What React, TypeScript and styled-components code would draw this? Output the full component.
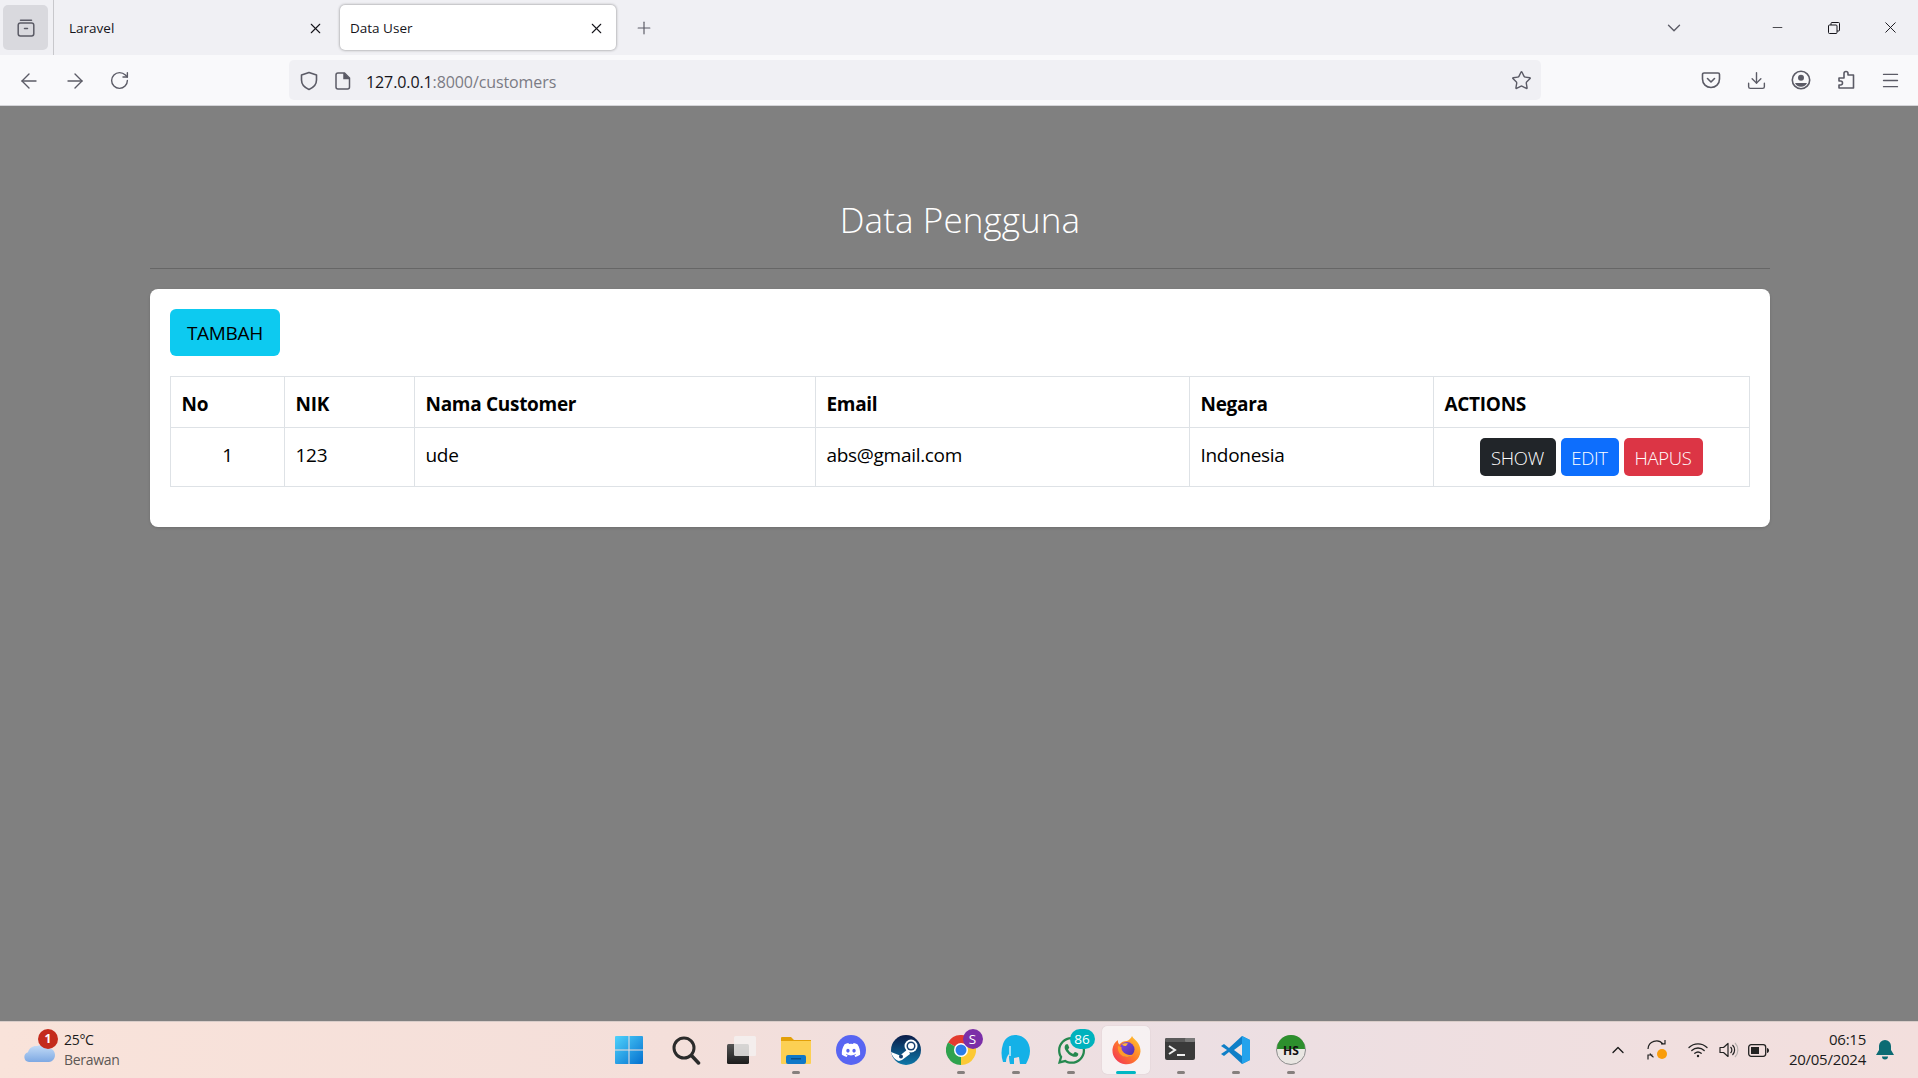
import React from 'react';
import styled, { createGlobalStyle } from 'styled-components';
import {
  ArrowLeft,
  ArrowRight,
  ChevronDown,
  ChevronUp,
  Download,
  Menu,
  Minus,
  Plus,
  RotateCw,
  Star,
  X,
} from 'lucide-react';
import { FaDiscord, FaWhatsapp } from 'react-icons/fa';

const GlobalStyle = createGlobalStyle`
  html, body { margin: 0; padding: 0; height: 100%; overflow: hidden; }
  #root { height: 100%; }
  * { box-sizing: border-box; }
  body { font-family: "Open Sans", "Noto Sans", "Liberation Sans", sans-serif; }
`;

const Screen = styled.div`
  height: 1078px;
  display: flex;
  flex-direction: column;
  background: #808080;
`;

/* browser chrome */
const TabBar = styled.div`
  height: 55px;
  flex: none;
  display: flex;
  align-items: center;
  padding-left: 3px;
  background: #f0f0f4;
  color: #15141a;
`;

const TabListButton = styled.div`
  width: 45px;
  height: 45px;
  border-radius: 5px;
  background: #d9d9de;
  display: flex;
  align-items: center;
  justify-content: center;
  flex: none;
`;

const TabDivider = styled.div`
  width: 1px;
  height: 55px;
  margin: 0 5px;
  background: #c8c8cc;
  flex: none;
`;

const Tab = styled.div<{ $active?: boolean }>`
  width: 276px;
  height: 45px;
  flex: none;
  margin-right: 5px;
  padding: 1px 11px 0 10px;
  display: flex;
  align-items: center;
  justify-content: space-between;
  border-radius: 5px;
  font-size: 13.5px;
  background: ${(p) => (p.$active ? '#fff' : 'transparent')};
  box-shadow: ${(p) => (p.$active ? '0 0 3px rgba(0,0,0,.45)' : 'none')};
`;

const NewTab = styled.div`
  margin-left: 13px;
  padding-top: 1px;
  display: flex;
  color: #5b5b66;
`;

const TabBarEnd = styled.div`
  margin-left: auto;
  margin-right: -1px;
  display: flex;
  align-items: center;
  height: 100%;
`;

const AllTabs = styled.div`
  display: flex;
  color: #5b5b66;
  margin-right: 65px;
`;

const WindowButton = styled.div`
  width: 56.5px;
  display: flex;
  justify-content: center;
  color: #15141a;
`;

const Toolbar = styled.div`
  height: 51px;
  flex: none;
  display: flex;
  align-items: center;
  padding: 0 17px;
  background: #f9f9fb;
  color: #5b5b66;
  border-bottom: 1px solid #d4d4d8;
`;

const NavGroup = styled.div`
  width: 272px;
  flex: none;
  display: flex;
  align-items: center;
  gap: 22px;
  padding-top: 1px;
`;

const UrlBar = styled.div`
  width: 1252px;
  height: 40px;
  flex: none;
  border-radius: 5px;
  background: #f0f0f4;
  display: flex;
  align-items: center;
  padding: 1px 9px 0 10px;
`;

const UrlGap = styled.span`
  width: 16px;
`;

const UrlText = styled.div`
  margin-left: 15px;
  padding-top: 2px;
  font-size: 16px;
  letter-spacing: -0.1px;
  color: #15141a;
  span { color: #7b7b84; }
`;

const UrlEnd = styled.div`
  margin-left: auto;
  display: flex;
`;

const ToolIcons = styled.div`
  margin-left: auto;
  display: flex;
  gap: 24.5px;
  padding-top: 1px;
`;

/* page */
const Main = styled.main`
  flex: 1;
  padding: 0 148px 0 150px;
`;

const Title = styled.h1`
  margin: 0;
  height: 163px;
  padding-top: 92px;
  border-bottom: 1px solid #666;
  text-align: center;
  font-size: 35px;
  line-height: 44px;
  font-weight: 300;
  letter-spacing: .1px;
  color: #fff;
`;

const Card = styled.section`
  margin-top: 20px;
  height: 238px;
  padding: 20px;
  background: #fff;
  border-radius: 8px;
  box-shadow: 0 1px 3px rgba(0,0,0,.15);
`;

const AddButton = styled.button`
  display: block;
  width: 110px;
  height: 47px;
  padding: 0;
  border: 0;
  border-radius: 6px;
  background: #0dcaf0;
  color: #000;
  font: 400 19px "Open Sans", sans-serif;
  letter-spacing: -0.3px;
`;

const Table = styled.table`
  margin-top: 20px;
  width: 1579px;
  table-layout: fixed;
  border-collapse: collapse;
  color: #000;
  font-size: 19px;
`;

const Th = styled.th`
  height: 51px;
  padding: 4px 10.5px 0;
  text-align: left;
  font-weight: 700;
  border: 1.5px solid #dee2e6;
  letter-spacing: -0.3px;
`;

const Td = styled.td<{ $center?: boolean }>`
  height: 59px;
  padding: 0 10.5px 5px;
  border: 1.5px solid #dee2e6;
  font-weight: 400;
  letter-spacing: -0.3px;
  text-align: ${(p) => (p.$center ? 'center' : 'left')};
`;

const Actions = styled.div`
  display: flex;
  justify-content: center;
  gap: 5px;
  padding: 5px 1px 0 0;
`;

const ActionButton = styled.button<{ $bg: string; $w: number }>`
  width: ${(p) => p.$w}px;
  height: 38px;
  padding: 1px 0 0;
  border: 0;
  border-radius: 5px;
  background: ${(p) => p.$bg};
  color: #fff;
  font: 300 18.5px "Open Sans", sans-serif;
  letter-spacing: -0.3px;
`;

/* windows taskbar */
const Taskbar = styled.footer`
  height: 57px;
  flex: none;
  display: grid;
  grid-template-columns: 1fr auto 1fr;
  align-items: center;
  background: linear-gradient(90deg, #f9e3da 0%, #f4dfda 35%, #ecdfe3 62%, #f3dfdd 100%);
  border-top: 1px solid #d9cdc9;
  color: #1b1b1b;
`;

const Weather = styled.div`
  display: flex;
  align-items: center;
  padding-left: 23px;
  position: relative;
`;

const WeatherText = styled.div`
  margin-left: 7px;
  font-size: 14px;
  line-height: 20px;
  letter-spacing: -0.3px;
  small { display: block; font-size: 14px; color: #5d5855; }
`;

const Slots = styled.div`
  display: flex;
  padding-left: 2px;
`;

const Slot = styled.div<{ $active?: boolean; $mark?: 'dot' | 'bar'; $after?: number }>`
  width: 55px;
  height: 48px;
  margin-right: ${(p) => p.$after || 0}px;
  position: relative;
  display: flex;
  align-items: center;
  justify-content: center;
  border-radius: 5px;
  &::before {
    content: '';
    position: absolute;
    inset: 0 3.5px;
    border-radius: 5px;
    background: ${(p) => (p.$active ? 'rgba(255,255,255,.55)' : 'transparent')};
    box-shadow: ${(p) => (p.$active ? '0 0 1px rgba(0,0,0,.2)' : 'none')};
  }
  &::after {
    content: '';
    position: absolute;
    bottom: 0;
    left: 50%;
    transform: translateX(-50%);
    display: ${(p) => (p.$mark ? 'block' : 'none')};
    width: ${(p) => (p.$mark === 'bar' ? 20 : 8)}px;
    height: 3px;
    border-radius: 2px;
    background: ${(p) => (p.$mark === 'bar' ? '#00b7c3' : '#857f7d')};
  }
  svg { position: relative; }
`;

const Badge = styled.span<{ $bg: string; $w?: number }>`
  position: absolute;
  top: 3px;
  right: ${(p) => (p.$w ? 4 : 6)}px;
  min-width: ${(p) => p.$w || 20}px;
  height: 20px;
  border-radius: 10px;
  background: ${(p) => p.$bg};
  color: #fff;
  font-size: 13.5px;
  line-height: 20px;
  text-align: center;
`;

const WeatherBadge = styled(Badge)`
  top: -1px;
  left: 38px;
  right: auto;
  font-weight: 700;
  font-size: 12px;
`;

const Tray = styled.div`
  justify-self: end;
  display: flex;
  align-items: center;
  color: #1b1b1b;
`;

const TrayIcon = styled.div<{ $w: number }>`
  width: ${(p) => p.$w}px;
  display: flex;
  justify-content: center;
`;

const Clock = styled.div`
  margin: 0 0 2px 11px;
  text-align: right;
  font-size: 15px;
  line-height: 20px;
  letter-spacing: -0.25px;
`;

const BellWrap = styled.div`
  display: flex;
  margin: 0 24px 0 10px;
`;

/* icons */
const TabsIcon = () => (
  <svg width="20" height="20" viewBox="0 0 20 20" fill="none" stroke="#5b5b66" strokeWidth="1.5">
    <path d="M4.5 2.2h11" strokeLinecap="round" />
    <rect x="2.2" y="5" width="15.6" height="13" rx="2.2" />
    <path d="M8.5 10.5h3" strokeLinecap="round" />
  </svg>
);

const ShieldIcon = () => (
  <svg width="20" height="20" viewBox="0 0 20 20" fill="none" stroke="#5b5b66" strokeWidth="1.6">
    <path d="M10 1.5l7.5 2.6v5c0 4.6-3.2 7.7-7.5 9.4-4.3-1.700-7.500-4.800-7.500-9.400v-5z" strokeLinejoin="round" />
  </svg>
);

const PageIcon = () => (
  <svg width="16" height="18" viewBox="0 0 16 18" fill="none" stroke="#5b5b66" strokeWidth="1.5">
    <path d="M3 1h6.500l5 5v9a2 2 0 0 1-2 2H3a2 2 0 0 1-2-2V3a2 2 0 0 1 2-2z" />
    <path d="M9 1v5.500h5.500" fill="#5b5b66" />
  </svg>
);

const PocketIcon = () => (
  <svg width="20" height="20" viewBox="0 0 20 20" fill="none" stroke="#5b5b66" strokeWidth="1.6">
    <path d="M3 3h14a1.500 1.500 0 0 1 1.500 1.500V9c0 5-3.800 8.500-8.500 8.500S1.500 14 1.500 9V4.500A1.500 1.500 0 0 1 3 3z" />
    <path d="M6.500 8.500L10 12l3.500-3.500" strokeLinecap="round" strokeLinejoin="round" />
  </svg>
);

const AccountIcon = () => (
  <svg width="20" height="20" viewBox="0 0 20 20" fill="none">
    <circle cx="10" cy="10" r="8.700" stroke="#5b5b66" strokeWidth="1.600" />
    <circle cx="10" cy="7.800" r="3" fill="#5b5b66" />
    <path d="M4 13h12c-.8 2.300-3.300 3.800-6 3.800S4.800 15.300 4 13z" fill="#5b5b66" />
  </svg>
);

const ExtensionIcon = () => (
  <svg width="20" height="20" viewBox="0 0 20 20" fill="none" stroke="#5b5b66" strokeWidth="1.600" strokeLinejoin="round">
    <path d="M8 5V3.500a2 2 0 0 1 4 0V5h5.500v13H3v-3h1.500a2 2 0 0 0 0-4H3V8h5z" />
  </svg>
);

const RestoreIcon = () => (
  <svg width="12" height="12" viewBox="0 0 12 12" fill="none" stroke="#15141a" strokeWidth="1">
    <rect x=".5" y="3" width="8.500" height="8.500" rx="1" />
    <path d="M3 3V1.500a1 1 0 0 1 1-1h6.500a1 1 0 0 1 1 1V8a1 1 0 0 1-1 1H9" />
  </svg>
);

const CloudIcon = () => (
  <svg width="34" height="30" viewBox="0 0 34 30">
    <defs>
      <linearGradient id="cloudFill" x1="0" y1="0" x2="0" y2="1">
        <stop offset="0" stopColor="#c4dcf7" />
        <stop offset="1" stopColor="#7ea9e3" />
      </linearGradient>
    </defs>
    <circle cx="23" cy="9" r="6" fill="#f59a23" />
    <path d="M6 27a5 5 0 0 1-1-9.800C6 13 10 10.500 14 11c3-1.500 7-1 10 2 4.500 0 8 2.500 8 7 0 4-3 7-6 7z" fill="url(#cloudFill)" />
  </svg>
);

const WindowsIcon = () => (
  <svg width="30" height="30" viewBox="0 0 30 30">
    <defs>
      <linearGradient id="winFill" x1="0" y1="0" x2="1" y2="1">
        <stop offset="0" stopColor="#4fd2fb" />
        <stop offset="1" stopColor="#0570cf" />
      </linearGradient>
    </defs>
    <path d="M1 2a1 1 0 0 1 1-1h12.500v13.500H1zM15.500 1H28a1 1 0 0 1 1 1v12.500H15.500zM1 15.500h13.500V29H2a1 1 0 0 1-1-1zM15.500 15.500H29V28a1 1 0 0 1-1 1H15.500z" fill="url(#winFill)" />
  </svg>
);

const SearchIcon = () => (
  <svg width="30" height="30" viewBox="0 0 30 30" fill="none" stroke="#2b2b2b" strokeWidth="3" strokeLinecap="round">
    <circle cx="13" cy="13" r="10" />
    <path d="M20.500 20.500L27.500 28" strokeWidth="3.500" />
  </svg>
);

const TaskViewIcon = () => (
  <svg width="30" height="30" viewBox="0 0 30 30">
    <defs>
      <linearGradient id="tvFill" x1="0" y1="0" x2="0" y2="1">
        <stop offset="0" stopColor="#555" />
        <stop offset="1" stopColor="#1c1c1c" />
      </linearGradient>
    </defs>
    <rect x="1" y="9" width="22" height="20" rx="1.500" fill="url(#tvFill)" />
    <rect x="8" y="1" width="22" height="20" rx="1.500" fill="#f4f1f0" fillOpacity=".82" />
  </svg>
);

const FolderIcon = () => (
  <svg width="32" height="28" viewBox="0 0 32 28">
    <path d="M1 2a1 1 0 0 1 1-1h9l3 3h17v5H1z" fill="#e3a008" />
    <path d="M1 5h30v22a1 1 0 0 1-1 1H2a1 1 0 0 1-1-1z" fill="#fcd053" />
    <rect x="6" y="19" width="20" height="9" rx="2" fill="#0f78c8" />
    <rect x="11" y="22" width="10" height="1.500" fill="#0a4f8a" />
  </svg>
);

const DiscordIcon = () => (
  <svg width="30" height="30" viewBox="0 0 30 30">
    <circle cx="15" cy="15" r="15" fill="#5865f2" />
    <foreignObject x="5" y="5" width="20" height="20">
      <FaDiscord size={20} color="#fff" />
    </foreignObject>
  </svg>
);

const SteamIcon = () => (
  <svg width="30" height="30" viewBox="0 0 30 30">
    <defs>
      <linearGradient id="steamFill" x1="0" y1="0" x2="0" y2="1">
        <stop offset="0" stopColor="#0b1c48" />
        <stop offset="1" stopColor="#0e77a8" />
      </linearGradient>
    </defs>
    <circle cx="15" cy="15" r="15" fill="url(#steamFill)" />
    <path d="M0 17l9 3.500 8-6.500 2 5-8 6-3 1C4 25 1 21 0 17z" fill="#fff" />
    <circle cx="20" cy="11" r="6.500" fill="#fff" />
    <circle cx="20" cy="11" r="4.500" fill="#17406f" />
    <circle cx="20" cy="11" r="3" fill="#fff" />
    <circle cx="10" cy="21.500" r="2" fill="#17406f" />
  </svg>
);

const ChromeIcon = () => (
  <svg width="30" height="30" viewBox="0 0 30 30">
    <path d="M15 15L2 7.500A15 15 0 0 1 28 7.500z" fill="#e33b2e" />
    <path d="M15 15l-13-7.500A15 15 0 0 0 15 30z" fill="#2fa24d" />
    <path d="M15 15l13-7.500A15 15 0 0 1 15 30z" fill="#fcc934" />
    <circle cx="15" cy="15" r="7" fill="#fff" />
    <circle cx="15" cy="15" r="5.500" fill="#2b7de9" />
  </svg>
);

const ElephantIcon = () => (
  <svg width="30" height="32" viewBox="0 0 30 32">
    <path d="M14 1c8 0 15 6 15 16 0 5-2 9-4 13h-6l-1-7-5 1v6H9c-1-4-1-7-1-10-2 2-3 5-3 8H2C0 22 0 16 2 10 4 4 9 1 14 1z" fill="#14b1e7" />
    <path d="M9 12v10" stroke="#fff" strokeWidth="1.200" fill="none" />
  </svg>
);

const WhatsAppIcon = () => <FaWhatsapp size={31} color="#25884f" />;

const FirefoxIcon = () => (
  <svg width="30" height="30" viewBox="0 0 30 30">
    <defs>
      <linearGradient id="foxOuter" x1="1" y1="0" x2="0" y2="1">
        <stop offset="0" stopColor="#ffd02e" />
        <stop offset=".5" stopColor="#ff7a2a" />
        <stop offset="1" stopColor="#f0295f" />
      </linearGradient>
      <linearGradient id="foxGlobe" x1="0" y1="0" x2="1" y2="1">
        <stop offset="0" stopColor="#8a4be0" />
        <stop offset="1" stopColor="#4a2ea8" />
      </linearGradient>
    </defs>
    <path d="M21 1c1 2.500 4 4 6 7 2 3 2.500 6 2.500 8.500A14 14 0 1 1 1.500 14C2 10 4 7 7 5c-.3 2 .2 3.500 1.500 4.500C10 7 13 6 16 6c2-1 4-2.500 5-5z" fill="url(#foxOuter)" />
    <circle cx="16" cy="14.500" r="7.500" fill="url(#foxGlobe)" />
    <path d="M7 11c-1 6 3 11 9 11 3 0 5.500-1.200 7-3-2 1-5 1.500-8 0-3-1.500-5-4-4.500-7-1.500-.2-2.500-.5-3.500-1z" fill="#ff9a2a" />
    <path d="M11 9.500c2-1.500 4-1.500 6-1 -1 1-1.500 2-2 2.500-1.500 0-3-.5-4-1.500z" fill="#ffb43a" />
  </svg>
);

const TerminalIcon = () => (
  <svg width="32" height="24" viewBox="0 0 32 24">
    <rect x="0" y="0" width="30" height="22" rx="2" fill="#3a3a3a" />
    <rect x="0" y="0" width="30" height="4" rx="1.500" fill="#5a5a5a" />
    <rect x="20" y="0" width="10" height="4" rx="1" fill="#7a7a7a" />
    <path d="M4 8l6 4-6 4" fill="none" stroke="#eee" strokeWidth="2" />
    <path d="M12 17h8" stroke="#eee" strokeWidth="2" />
  </svg>
);

const VSCodeIcon = () => (
  <svg width="30" height="30" viewBox="0 0 30 30">
    <path d="M21 1l8 4v20l-8 4L8 17l-5 4-3-2 6-4-6-4 3-2 5 4z" fill="#0f7fc7" />
    <path d="M21 1l8 4v20l-8 4z" fill="#23a3ec" />
    <path d="M21 9l-8 6 8 6z" fill="#f3e4e2" />
  </svg>
);

const HsIcon = () => (
  <svg width="30" height="30" viewBox="0 0 30 30">
    <circle cx="15" cy="15" r="14.500" fill="#e9e6e2" stroke="#8d8d8d" />
    <path d="M1 14a14 14 0 0 1 28 0z" fill="#2d8f2d" />
    <text x="15" y="20" textAnchor="middle" fontSize="12" fontWeight="700" fontFamily="Open Sans, sans-serif" fill="#111">HS</text>
  </svg>
);

const SyncIcon = () => (
  <svg width="22" height="22" viewBox="0 0 22 22" fill="none" stroke="#222" strokeWidth="1.200">
    <path d="M1 10a8.500 8.500 0 0 1 15-5l2-.5M18 1v4h-4" />
    <path d="M3 14.500c.8 1.600 2 3 3.500 3.800M1 20.500V16h4.500" />
    <circle cx="15" cy="15" r="5" fill="#f99d0b" stroke="none" />
  </svg>
);

const WifiIcon = () => (
  <svg width="20" height="16" viewBox="0 0 20 16" fill="none" stroke="#222" strokeWidth="1.300" strokeLinecap="round">
    <path d="M1 5.500a13 13 0 0 1 18 0M3.800 8.500a9 9 0 0 1 12.400 0M6.800 11.300a5 5 0 0 1 6.400 0" />
    <circle cx="10" cy="14" r="1.200" fill="#222" stroke="none" />
  </svg>
);

const SpeakerIcon = () => (
  <svg width="20" height="18" viewBox="0 0 20 18" fill="none" stroke="#222" strokeWidth="1.200">
    <path d="M1 6.500h3.500L9 2.500v13l-4.500-4H1z" strokeLinejoin="round" />
    <path d="M11.500 6a4 4 0 0 1 0 6" />
    <path d="M13.500 4a7 7 0 0 1 0 10" />
    <path d="M16 2a10 10 0 0 1 0 14" stroke="#b8b2b0" />
  </svg>
);

const BatteryIcon = () => (
  <svg width="21" height="13" viewBox="0 0 21 13" fill="none">
    <rect x=".7" y=".7" width="17" height="11.600" rx="2.500" stroke="#222" strokeWidth="1.300" />
    <rect x="3" y="3" width="8" height="7" fill="#222" />
    <path d="M19 4v5c1 0 2-1 2-2.500S20 4 19 4z" fill="#222" />
  </svg>
);

const BellIcon = () => (
  <svg width="18" height="20" viewBox="0 0 18 20">
    <path d="M9 0a6 6 0 0 1 6 6v4l3 5H0l3-5V6a6 6 0 0 1 6-6zM6 16.500h6a3 3 0 0 1-6 0z" fill="#0c6b73" />
  </svg>
);

const columns = [114, 130, 401, 374, 244, 316];
const headers = ['No', 'NIK', 'Nama Customer', 'Email', 'Negara', 'ACTIONS'];

const App = () => {
  return (
    <Screen>
      <GlobalStyle />
      {/* tabs */}
      <TabBar>
        <TabListButton>
          <TabsIcon />
        </TabListButton>
        <TabDivider />
        <Tab>
          Laravel
          <X size={17} strokeWidth={1.5} />
        </Tab>
        <Tab $active>
          Data User
          <X size={17} strokeWidth={1.5} />
        </Tab>
        <NewTab>
          <Plus size={20} strokeWidth={1.4} />
        </NewTab>
        <TabBarEnd>
          <AllTabs>
            <ChevronDown size={22} strokeWidth={1.5} />
          </AllTabs>
          <WindowButton>
            <Minus size={15} strokeWidth={1.2} />
          </WindowButton>
          <WindowButton>
            <RestoreIcon />
          </WindowButton>
          <WindowButton>
            <X size={19} strokeWidth={1.2} />
          </WindowButton>
        </TabBarEnd>
      </TabBar>

      {/* address bar */}
      <Toolbar>
        <NavGroup>
          <ArrowLeft size={24} strokeWidth={1.4} />
          <ArrowRight size={24} strokeWidth={1.4} />
          <RotateCw size={21} strokeWidth={1.6} />
        </NavGroup>
        <UrlBar>
          <ShieldIcon />
          <UrlGap />
          <PageIcon />
          <UrlText>
            127.0.0.1<span>:8000/customers</span>
          </UrlText>
          <UrlEnd>
            <Star size={21} strokeWidth={1.6} />
          </UrlEnd>
        </UrlBar>
        <ToolIcons>
          <PocketIcon />
          <Download size={21} strokeWidth={1.6} />
          <AccountIcon />
          <ExtensionIcon />
          <Menu size={21} strokeWidth={1.5} />
        </ToolIcons>
      </Toolbar>

      {/* page */}
      <Main>
        <Title>Data Pengguna</Title>
        <Card>
          <AddButton>TAMBAH</AddButton>
          <Table>
            <colgroup>
              {columns.map((w, i) => (
                <col key={i} width={w} />
              ))}
            </colgroup>
            <thead>
              <tr>
                {headers.map((h) => (
                  <Th key={h}>{h}</Th>
                ))}
              </tr>
            </thead>
            <tbody>
              <tr>
                <Td $center>1</Td>
                <Td>123</Td>
                <Td>ude</Td>
                <Td>abs@gmail.com</Td>
                <Td>Indonesia</Td>
                <Td>
                  <Actions>
                    <ActionButton $bg="#212529" $w={76}>SHOW</ActionButton>
                    <ActionButton $bg="#0d6efd" $w={58}>EDIT</ActionButton>
                    <ActionButton $bg="#dc3545" $w={79}>HAPUS</ActionButton>
                  </Actions>
                </Td>
              </tr>
            </tbody>
          </Table>
        </Card>
      </Main>

      {/* taskbar */}
      <Taskbar>
        <Weather>
          <CloudIcon />
          <WeatherBadge $bg="#c42b1c">1</WeatherBadge>
          <WeatherText>
            25°C
            <small>Berawan</small>
          </WeatherText>
        </Weather>
        <Slots>
          <Slot $after={2}><WindowsIcon /></Slot>
          <Slot><SearchIcon /></Slot>
          <Slot><TaskViewIcon /></Slot>
          <Slot $mark="dot"><FolderIcon /></Slot>
          <Slot><DiscordIcon /></Slot>
          <Slot><SteamIcon /></Slot>
          <Slot $mark="dot">
            <ChromeIcon />
            <Badge $bg="#7b2fa8">S</Badge>
          </Slot>
          <Slot $mark="dot"><ElephantIcon /></Slot>
          <Slot $mark="dot">
            <WhatsAppIcon />
            <Badge $bg="#00b2bd" $w={25}>86</Badge>
          </Slot>
          <Slot $active $mark="bar"><FirefoxIcon /></Slot>
          <Slot $mark="dot"><TerminalIcon /></Slot>
          <Slot $mark="dot"><VSCodeIcon /></Slot>
          <Slot $mark="dot"><HsIcon /></Slot>
        </Slots>
        <Tray>
          <TrayIcon $w={40}><ChevronUp size={20} strokeWidth={1.6} /></TrayIcon>
          <TrayIcon $w={40}><SyncIcon /></TrayIcon>
          <TrayIcon $w={40}><WifiIcon /></TrayIcon>
          <TrayIcon $w={22}><SpeakerIcon /></TrayIcon>
          <TrayIcon $w={38}><BatteryIcon /></TrayIcon>
          <Clock>
            06:15
            <br />
            20/05/2024
          </Clock>
          <BellWrap>
            <BellIcon />
          </BellWrap>
        </Tray>
      </Taskbar>
    </Screen>
  );
};

export default App;
